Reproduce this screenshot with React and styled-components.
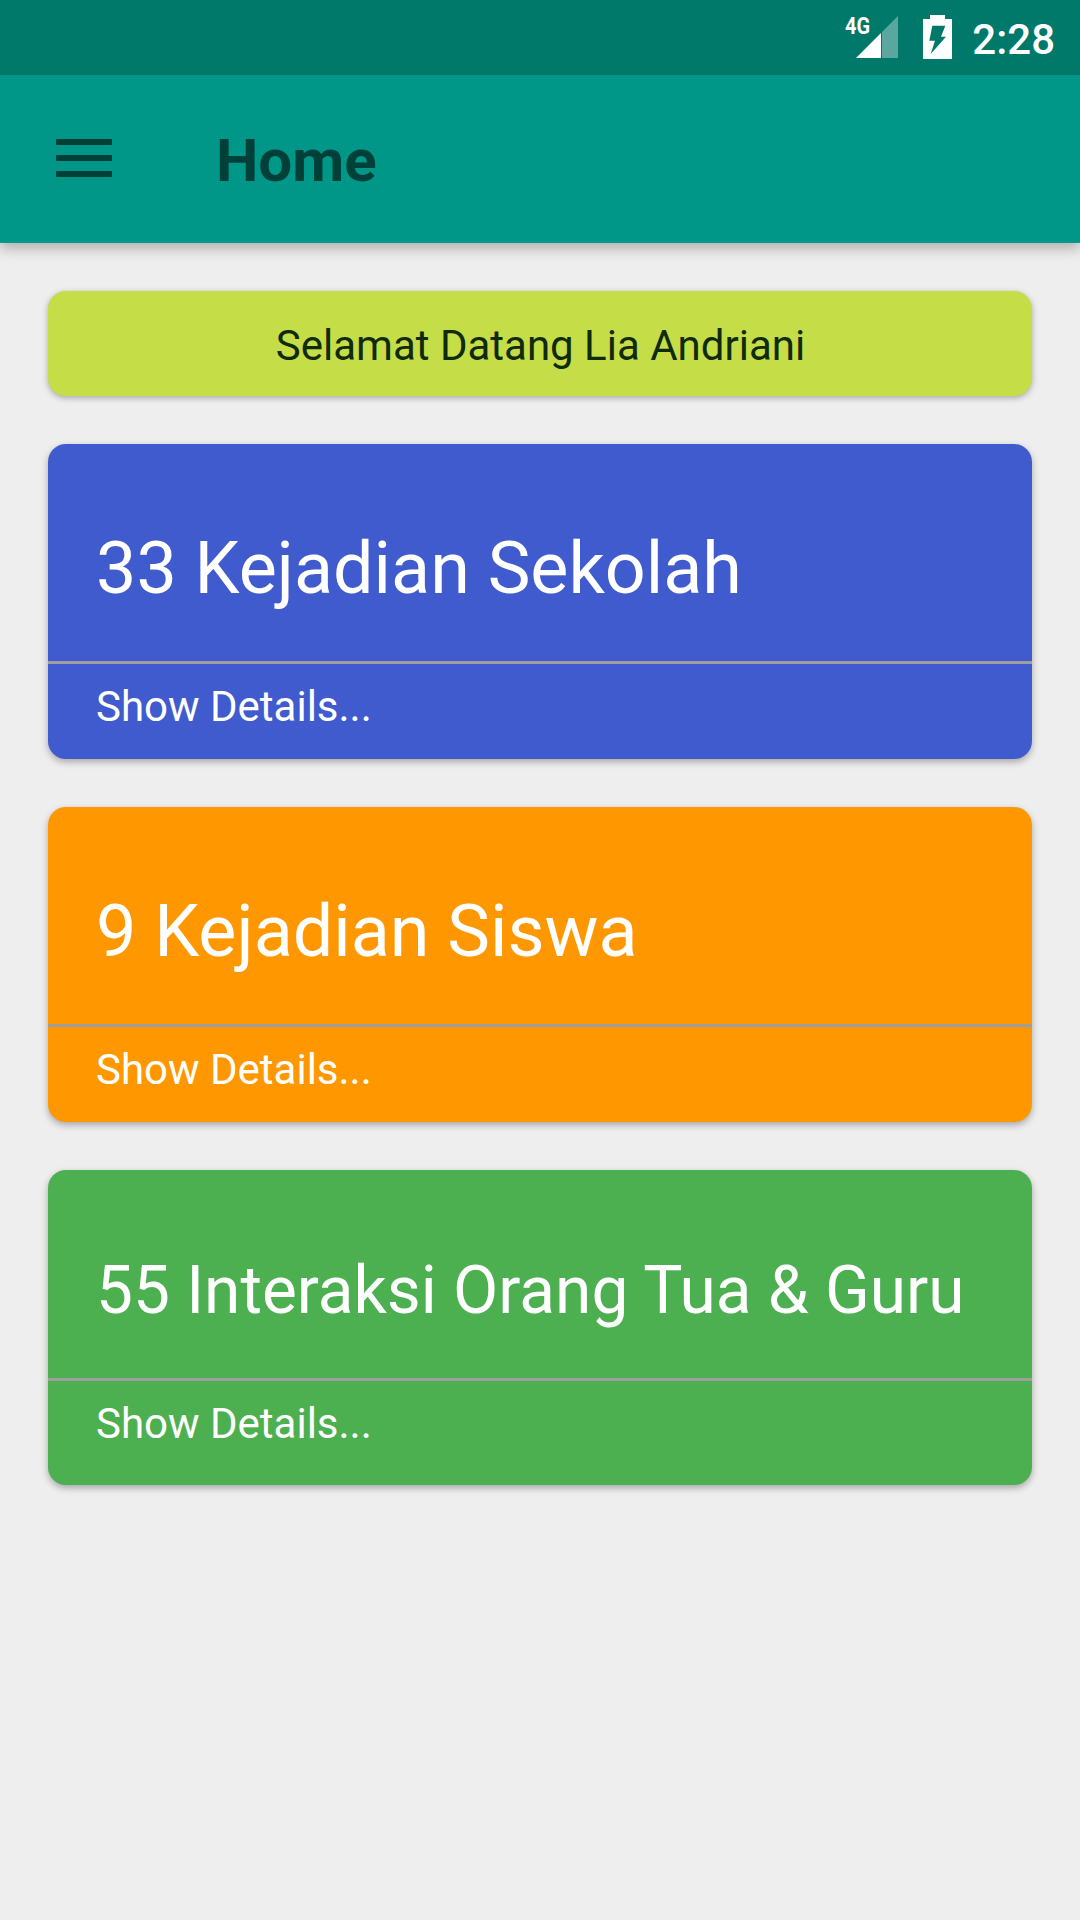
import React from 'react';
import styled, { createGlobalStyle } from 'styled-components';

const GlobalStyle = createGlobalStyle`
	html, body {
		margin: 0;
		padding: 0;
		background: #eeeeee;
		font-family: Roboto, "Liberation Sans", sans-serif;
	}
`;

const Screen = styled.div`
	width: 1080px;
	height: 1920px;
	overflow: hidden;
	background: #eeeeee;
	display: flex;
	flex-direction: column;
`;
const StatusBar = styled.div`
	height: 75px;
	flex: none;
	background: #00796b;
	display: flex;
	align-items: center;
	justify-content: flex-end;
	padding-right: 25px;
	color: #fff;
`;
const SignalIcon = styled.svg`
	width: 54px;
	height: 44px;
	margin-right: 24px;
	margin-bottom: 1px;
	overflow: visible;
`;
const BatteryIcon = styled.svg`
	width: 29px;
	height: 44px;
	margin-right: 20px;
	margin-bottom: 1px;
`;
const Clock = styled.span`
	font-size: 42px;
	font-weight: 500;
	line-height: 75px;
	padding-top: 4px;
`;
const AppBar = styled.header`
	height: 168px;
	flex: none;
	background: #009688;
	display: flex;
	align-items: center;
	box-shadow: 0 6px 12px rgba(0, 0, 0, 0.25);
	position: relative;
`;
const MenuIcon = styled.div`
	width: 56px;
	margin: 0 0 2px 56px;
	display: flex;
	flex-direction: column;
	gap: 10px;
	& span {
		display: block;
		height: 6px;
		background: #004038;
	}
`;
const Title = styled.h1`
	margin: 2px 0 0 104px;
	font-size: 60px;
	font-weight: 700;
	color: #004038;
`;
const Content = styled.main`
	padding: 48px 48px 0;
	display: flex;
	flex-direction: column;
	gap: 48px;
`;
const Banner = styled.div`
	height: 105px;
	box-sizing: border-box;
	padding: 4px 0 0 1px;
	border-radius: 18px;
	background: #c5dd46;
	color: #102a0c;
	font-size: 42px;
	display: flex;
	align-items: center;
	justify-content: center;
	box-shadow: 0 2px 6px rgba(0, 0, 0, 0.3);
`;
const Card = styled.section`
	height: 315px;
	border-radius: 18px;
	background: ${(p) => p.$color};
	color: #fff;
	display: flex;
	flex-direction: column;
	box-shadow: 0 3px 7px rgba(0, 0, 0, 0.3);
`;
const CardTop = styled.div`
	height: ${(p) => p.$height}px;
	box-sizing: border-box;
	flex: none;
	padding: ${(p) => p.$offset}px 0 0 48px;
	display: flex;
	align-items: center;
	font-size: ${(p) => p.$size}px;
	line-height: 1;
	white-space: nowrap;
`;
const Divider = styled.div`
	height: 3px;
	flex: none;
	background: #9e9e9e;
`;
const CardBottom = styled.div`
	flex: 1;
	padding: 0 0 ${(p) => p.$lift}px 48px;
	display: flex;
	align-items: center;
	font-size: 42px;
`;

const cards = [
	{ title: '33 Kejadian Sekolah', color: '#3f5bce', size: 71.85, height: 217, offset: 32, lift: 10 },
	{ title: '9 Kejadian Siswa', color: '#ff9800', size: 71.85, height: 217, offset: 32, lift: 10 },
	{ title: '55 Interaksi Orang Tua & Guru', color: '#4caf50', size: 65.75, height: 208, offset: 34, lift: 20 },
];

const App = () => {
	return (
		<Screen>
			<GlobalStyle />
			<StatusBar>
				<SignalIcon viewBox="0 0 54 44">
					<path d="M11 43 L36 43 L36 18 Z" fill="#fff" />
					<path d="M37 43 L53 43 L53 1 L37 17 Z" fill="#fff" opacity="0.35" />
					<text x="0" y="19" fontFamily="Roboto" fontWeight="700" fontSize="24" textLength="25" lengthAdjust="spacingAndGlyphs" fill="#fff">4G</text>
				</SignalIcon>
				<BatteryIcon viewBox="0 0 29 44">
					<path d="M7 0 H22 V4 H29 V44 H0 V4 H7 Z" fill="#fff" />
					<path d="M9.3 10.7 H22.3 L18 21.7 H23 L7.7 39 L12 25.7 H6.3 Z" fill="#00796b" />
				</BatteryIcon>
				<Clock>2:28</Clock>
			</StatusBar>
			<AppBar>
				<MenuIcon>
					<span />
					<span />
					<span />
				</MenuIcon>
				<Title>Home</Title>
			</AppBar>
			<Content>
				<Banner>Selamat Datang Lia Andriani</Banner>
				{cards.map((card) => (
					<Card key={card.title} $color={card.color}>
						<CardTop $size={card.size} $height={card.height} $offset={card.offset}>{card.title}</CardTop>
						<Divider />
						<CardBottom $lift={card.lift}>Show Details...</CardBottom>
					</Card>
				))}
			</Content>
		</Screen>
	);
};

export default App;
